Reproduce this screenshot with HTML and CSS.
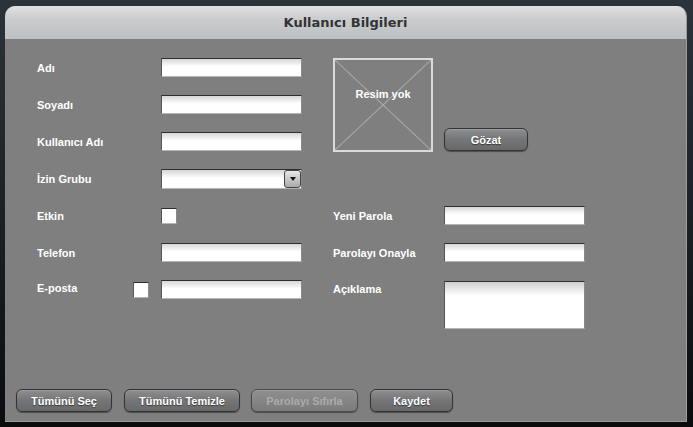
FILE: index.html
```html
<!DOCTYPE html>
<html lang="tr">
<head>
    <meta charset="UTF-8">
    <title>Kullanıcı Bilgileri</title>
    <link rel="stylesheet" href="styles.css">
</head>
<body>
    <div class="user-panel">
        <div class="panel-header">Kullanıcı Bilgileri</div>

        <div class="panel-body">
            <div class="photo-box">Resim yok</div>
            <button class="btn btn-browse">Gözat</button>

            <label class="field-label">Adı</label>
            <input class="text-input" type="text">

            <label class="field-label">Soyadı</label>
            <input class="text-input" type="text">

            <label class="field-label">Kullanıcı Adı</label>
            <input class="text-input" type="text">

            <label class="field-label">İzin Grubu</label>
            <div class="select-box"><span class="select-arrow"></span></div>

            <label class="field-label">Etkin</label>
            <span class="check-box"></span>
            <label class="field-label right-label">Yeni Parola</label>
            <input class="text-input right-field" type="password">

            <label class="field-label">Telefon</label>
            <input class="text-input" type="text">
            <label class="field-label right-label">Parolayı Onayla</label>
            <input class="text-input right-field" type="password">

            <div class="field-label label-with-check">E-posta <span class="check-box"></span></div>
            <input class="text-input" type="text">
            <label class="field-label right-label label-top">Açıklama</label>
            <textarea class="text-area right-field"></textarea>
        </div>

        <div class="panel-footer">
            <button class="btn btn-select">Tümünü Seç</button>
            <button class="btn btn-clear">Tümünü Temizle</button>
            <button class="btn btn-reset" disabled>Parolayı Sıfırla</button>
            <button class="btn btn-save">Kaydet</button>
        </div>
    </div>
</body>
</html>
```

FILE: styles.css
```css
/* Kullanıcı bilgileri formu */
html, body {
    margin: 0;
    height: 100%;
}

body {
    background: linear-gradient(180deg, #2b343a 0%, #1b2126 50%, #0a0c0e 100%);
    padding: 6px 6px 5px 5px;
    box-sizing: border-box;
    font-family: "Liberation Sans", Arial, sans-serif;
}

.user-panel {
    width: 682px;
    height: 416px;
    background: #7f7f7f;
    border-right: 1px solid #9d9d9d;
    border-bottom: 1px solid #9d9d9d;
    border-radius: 10px 10px 0 0;
    box-sizing: border-box;
    display: flex;
    flex-direction: column;
    overflow: hidden;
}

.panel-header {
    height: 33px;
    line-height: 33px;
    text-align: center;
    font-family: "DejaVu Sans", sans-serif;
    font-size: 13px;
    font-weight: bold;
    color: #333;
    background: linear-gradient(180deg, #dfe1e2, #c9cbcd 40%, #bec1c3);
    flex-shrink: 0;
}

.panel-body {
    flex: 1;
    display: grid;
    grid-template-columns: 124px 141px 31px 111px 141px;
    grid-auto-rows: 37px;
    align-items: center;
    align-content: start;
    padding: 10px 0 0 32px;
}

.panel-body > * {
    grid-column: 2;
}

.panel-body > .field-label {
    grid-column: 1;
}

.panel-body > .right-label {
    grid-column: 4;
}

.panel-body > .right-field {
    grid-column: 5;
}

.field-label {
    color: #fff;
    font-size: 11px;
    font-weight: bold;
}

.label-with-check {
    display: flex;
    align-items: center;
    justify-content: space-between;
    padding-right: 12px;
    margin-top: -3px;
}

.label-with-check .check-box {
    margin-top: 4px;
}

.panel-body > .label-top {
    align-self: start;
    margin-top: 12px;
}

.text-input, .text-area, .select-box {
    width: 141px;
    height: 19px;
    box-sizing: border-box;
    border: 1px solid;
    border-color: #2e2e2e #8a8a8a #b5b5b5 #555;
    background: linear-gradient(180deg, #d6d6d6 0%, #fff 45%, #fff 100%);
    padding: 0;
    margin: 0;
}

.panel-body > .text-area {
    align-self: start;
    height: 48px;
    margin-top: 10px;
    resize: none;
    background: linear-gradient(180deg, #cfcfcf 0%, #fff 30%, #fff 100%);
}

.select-box {
    height: 20px;
    display: flex;
    justify-content: flex-end;
    align-items: center;
    padding-right: 0;
}

.select-arrow {
    width: 17px;
    height: 18px;
    box-sizing: border-box;
    border: 1px solid #444;
    border-radius: 3px;
    background: linear-gradient(180deg, #e8e8e8, #a9a9a9);
    display: flex;
    align-items: center;
    justify-content: center;
}

.select-arrow::after {
    content: "";
    border-left: 3px solid transparent;
    border-right: 3px solid transparent;
    border-top: 4px solid #111;
}

.check-box {
    display: block;
    width: 16px;
    height: 16px;
    box-sizing: border-box;
    border: 1px solid;
    border-color: #2e2e2e #8a8a8a #b5b5b5 #555;
    background: #fff;
}

.panel-body > .photo-box {
    grid-row: 1 / span 3;
    grid-column: 4;
    width: 100px;
    height: 94px;
    box-sizing: border-box;
    border: 2px solid #dadada;
    padding-top: 28px;
    text-align: center;
    color: #fff;
    font-size: 11px;
    font-weight: bold;
    background:
        linear-gradient(to top right, transparent calc(50% - 1px), #a9a9a9 50%, transparent calc(50% + 1px)),
        linear-gradient(to bottom right, transparent calc(50% - 1px), #a9a9a9 50%, transparent calc(50% + 1px));
}

.btn {
    height: 23px;
    box-sizing: border-box;
    border: 1px solid #333;
    border-radius: 6px;
    background: linear-gradient(180deg, #8d8f90 0%, #737577 50%, #67696a 100%);
    box-shadow: inset 0 1px 0 rgba(255,255,255,0.15), 0 1px 1px rgba(0,0,0,0.4);
    color: #fff;
    font-family: "Liberation Sans", Arial, sans-serif;
    font-size: 11px;
    font-weight: bold;
    text-shadow: 0 1px 1px rgba(0,0,0,0.5);
    padding: 0;
    cursor: pointer;
}

.panel-body > .btn-browse {
    grid-column: 5;
    grid-row: 3;
    align-self: end;
    width: 84px;
    margin-bottom: 9px;
}

.btn[disabled] {
    color: #ababab;
    text-shadow: none;
    border-color: #4a4a4a;
    background: linear-gradient(180deg, #8e8f90, #7b7c7d);
}

.panel-footer {
    display: flex;
    gap: 12px;
    padding: 0 0 9px 11px;
}

.btn-select { width: 96px; }
.btn-clear  { width: 116px; }
.btn-reset  { width: 107px; margin-left: -1px; }
.btn-save   { width: 83px; }
```
